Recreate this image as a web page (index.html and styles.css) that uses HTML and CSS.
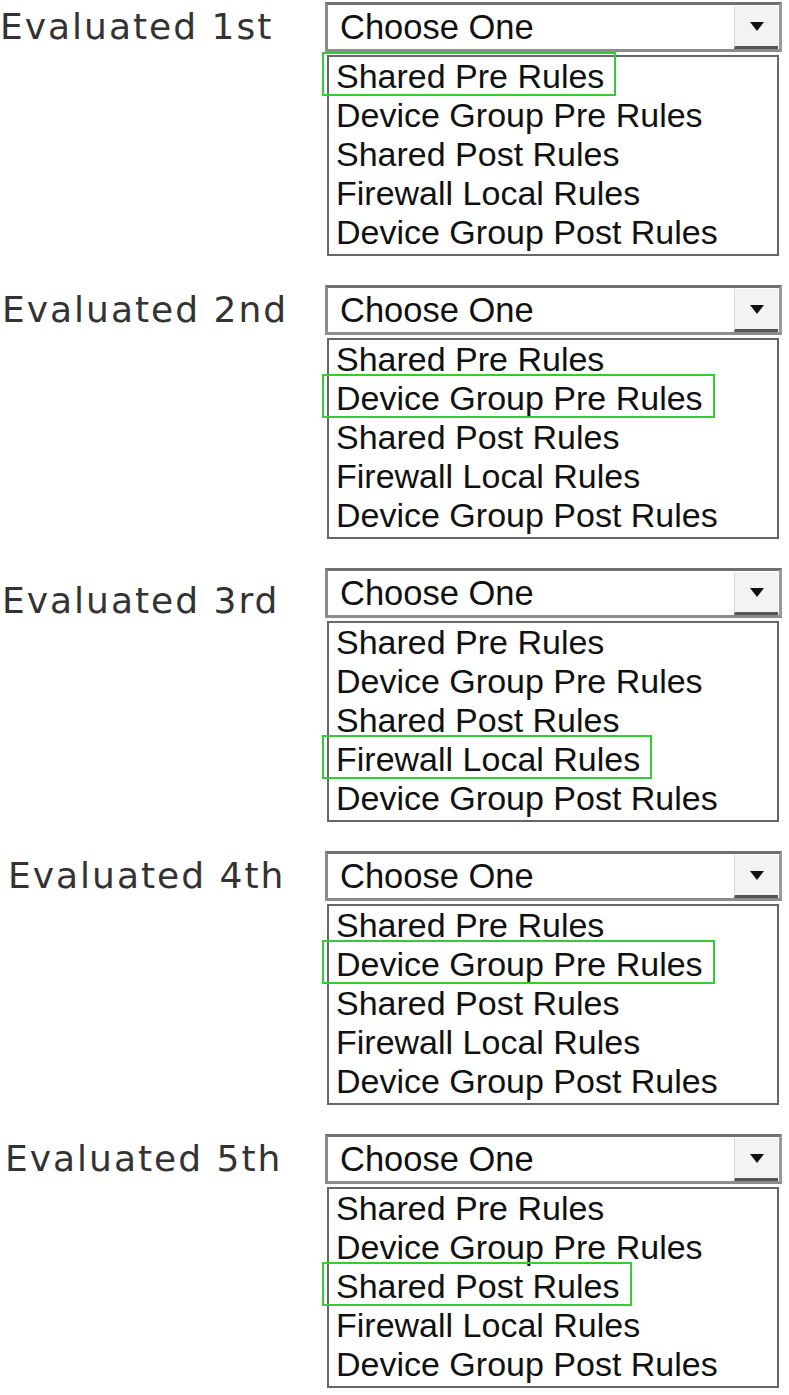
FILE: index.html
```html
<!DOCTYPE html>
<html lang="en">
<head>
    <meta charset="UTF-8">
    <meta name="viewport" content="width=device-width, initial-scale=1.0">
    <title>Rule Evaluation Order</title>
    <link rel="stylesheet" href="styles.css">
</head>
<body>
    <div class="row">
        <div class="label">Evaluated 1st</div>
        <div class="control">
            <div class="select">Choose One<span class="arrow"></span></div>
            <ul class="options">
                <li><span class="picked">Shared Pre Rules</span></li>
                <li>Device Group Pre Rules</li>
                <li>Shared Post Rules</li>
                <li>Firewall Local Rules</li>
                <li>Device Group Post Rules</li>
            </ul>
        </div>
    </div>

    <div class="row">
        <div class="label indent-2">Evaluated 2nd</div>
        <div class="control">
            <div class="select">Choose One<span class="arrow"></span></div>
            <ul class="options">
                <li>Shared Pre Rules</li>
                <li><span class="picked">Device Group Pre Rules</span></li>
                <li>Shared Post Rules</li>
                <li>Firewall Local Rules</li>
                <li>Device Group Post Rules</li>
            </ul>
        </div>
    </div>

    <div class="row">
        <div class="label indent-2 low">Evaluated 3rd</div>
        <div class="control">
            <div class="select">Choose One<span class="arrow"></span></div>
            <ul class="options">
                <li>Shared Pre Rules</li>
                <li>Device Group Pre Rules</li>
                <li>Shared Post Rules</li>
                <li><span class="picked">Firewall Local Rules</span></li>
                <li>Device Group Post Rules</li>
            </ul>
        </div>
    </div>

    <div class="row">
        <div class="label indent-8">Evaluated 4th</div>
        <div class="control">
            <div class="select">Choose One<span class="arrow"></span></div>
            <ul class="options">
                <li>Shared Pre Rules</li>
                <li><span class="picked">Device Group Pre Rules</span></li>
                <li>Shared Post Rules</li>
                <li>Firewall Local Rules</li>
                <li>Device Group Post Rules</li>
            </ul>
        </div>
    </div>

    <div class="row">
        <div class="label indent-5">Evaluated 5th</div>
        <div class="control">
            <div class="select">Choose One<span class="arrow"></span></div>
            <ul class="options">
                <li>Shared Pre Rules</li>
                <li>Device Group Pre Rules</li>
                <li><span class="picked">Shared Post Rules</span></li>
                <li>Firewall Local Rules</li>
                <li>Device Group Post Rules</li>
            </ul>
        </div>
    </div>
</body>
</html>
```

FILE: styles.css
```css
body {
    margin: 0;
    padding-top: 2px;
    background: #fff;
    color: #111;
    font-family: "Liberation Sans", Arial, sans-serif;
}
.row {
    display: flex;
    margin-bottom: 29px;
}
.label {
    box-sizing: border-box;
    width: 325px;
    flex-shrink: 0;
    font-family: "DejaVu Sans", Verdana, sans-serif;
    font-size: 36px;
    letter-spacing: 2px;
    line-height: 50px;
    color: #333;
}
.indent-2 {
    padding-left: 2px;
}
.indent-5 {
    padding-left: 5px;
}
.indent-8 {
    padding-left: 8px;
}
.low {
    padding-top: 8px;
}
.control {
    width: 457px;
}
.select {
    position: relative;
    height: 44px;
    border: 3px solid #8c8c8c;
    border-top-color: #707070;
    border-right-color: #9a9a9a;
    padding-left: 12px;
    font-size: 34.5px;
    line-height: 44px;
    background: #fff;
}
.arrow {
    position: absolute;
    top: 1px;
    right: 1px;
    width: 43px;
    height: 40px;
    background: #f3f3f3;
    border-left: 1px solid #d6d6d6;
    border-bottom: 3px solid #555;
}
.arrow::after {
    content: "";
    position: absolute;
    left: 15px;
    top: 16px;
    border-left: 7px solid transparent;
    border-right: 7px solid transparent;
    border-top: 9px solid #111;
}
.options {
    list-style: none;
    margin: 3px 0 0 2px;
    padding: 0 0 2px 7px;
    width: 441px;
    border: 2px solid #666;
    font-size: 34px;
    line-height: 39px;
}
.picked {
    position: relative;
}
.picked::before {
    content: "";
    position: absolute;
    top: -5px;
    bottom: -1px;
    left: -14px;
    right: -12px;
    border: 2px solid #33cc33;
}
```
